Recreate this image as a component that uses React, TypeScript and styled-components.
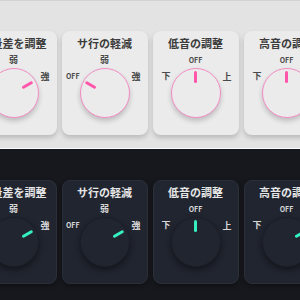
import React from "react";
import styled, { createGlobalStyle } from "styled-components";

const GlobalStyle = createGlobalStyle`
  html, body {
    margin: 0;
    padding: 0;
    width: 300px;
    height: 300px;
    overflow: hidden;
    font-family: "Noto Sans CJK JP", "Noto Sans", sans-serif;
  }
`;

type Mode = "light" | "dark";

const palette = {
  light: {
    page: "#e3e3e3",
    card: "#ebebeb",
    cardBorder: "transparent",
    cardShadow: "0 3px 5px rgba(0, 0, 0, 0.18)",
    title: "#3c3c3c",
    label: "#4a4a4a",
    knob: "#ebebeb",
    knobBorder: "1.5px solid #f48cc4",
    knobShadow: "0 3px 5px rgba(0, 0, 0, 0.2)",
    pointer: "#ff55aa",
  },
  dark: {
    page: "#17181d",
    card: "#212530",
    cardBorder: "#2b2f3a",
    cardShadow: "0 2px 4px rgba(0, 0, 0, 0.35)",
    title: "#e6e6e6",
    label: "#d8d8d8",
    knob: "#212530",
    knobBorder: "1.5px solid #1c1f28",
    knobShadow: "0 3px 6px rgba(0, 0, 0, 0.45)",
    pointer: "#35f0c2",
  },
};

const Section = styled.section<{ $mode: Mode }>`
  box-sizing: border-box;
  background: ${(p) => palette[p.$mode].page};
  border-top: ${(p) => (p.$mode === "light" ? "1px solid #d2d2d2" : "none")};
  border-bottom: ${(p) => (p.$mode === "light" ? "1px solid #fafafa" : "none")};
  height: ${(p) => (p.$mode === "light" ? "149px" : "151px")};
  padding-top: ${(p) => (p.$mode === "light" ? "30px" : "31px")};
`;

const Row = styled.div`
  display: flex;
  justify-content: center;
  gap: 5px;
`;

const Card = styled.div<{ $mode: Mode }>`
  flex: 0 0 84px;
  height: 104px;
  box-sizing: border-box;
  padding-top: 4px;
  border-radius: 8px;
  background: ${(p) => palette[p.$mode].card};
  border: 1px solid ${(p) => palette[p.$mode].cardBorder};
  box-shadow: ${(p) => palette[p.$mode].cardShadow};
  display: flex;
  flex-direction: column;
  align-items: center;
`;

const Title = styled.div<{ $mode: Mode }>`
  font-size: 11px;
  line-height: 14px;
  font-weight: 700;
  white-space: nowrap;
  color: ${(p) => palette[p.$mode].title};
  margin-bottom: 5px;
`;

const Dial = styled.div`
  display: grid;
  grid-template-columns: 1fr 50px 1fr;
  grid-template-rows: 10px 50px;
  row-gap: 3px;
  width: 84px;
`;

const Label = styled.span<{ $mode: Mode; $small?: boolean }>`
  font-size: ${(p) => (p.$small ? "7px" : "9px")};
  line-height: 10px;
  font-weight: 700;
  color: ${(p) => palette[p.$mode].label};
  white-space: nowrap;
`;

const TopLabel = styled(Label)`
  grid-column: 2;
  grid-row: 1;
  justify-self: center;
`;

const LeftLabel = styled(Label)`
  grid-column: 1;
  grid-row: 2;
  justify-self: end;
  margin-top: 3px;
`;

const RightLabel = styled(Label)`
  grid-column: 3;
  grid-row: 2;
  justify-self: start;
  margin-top: 4px;
  margin-left: 2px;
`;

const Knob = styled.div<{ $mode: Mode }>`
  grid-column: 2;
  grid-row: 2;
  position: relative;
  width: 50px;
  height: 50px;
  box-sizing: border-box;
  border-radius: 50%;
  background: ${(p) => palette[p.$mode].knob};
  border: ${(p) => palette[p.$mode].knobBorder};
  box-shadow: ${(p) => palette[p.$mode].knobShadow};
`;

const Pointer = styled.div<{ $mode: Mode; $angle: number }>`
  position: absolute;
  left: calc(50% - 1.5px);
  top: 1.5px;
  width: 3px;
  height: 12px;
  border-radius: 1.5px;
  background: ${(p) => palette[p.$mode].pointer};
  transform-origin: 1.5px 22px;
  transform: rotate(${(p) => p.$angle}deg);
`;

interface KnobSpec {
  title: string;
  top: string;
  left: string;
  right: string;
}

const knobs: KnobSpec[] = [
  { title: "音量差を調整", top: "弱", left: "", right: "強" },
  { title: "サ行の軽減", top: "弱", left: "OFF", right: "強" },
  { title: "低音の調整", top: "OFF", left: "下", right: "上" },
  { title: "高音の調整", top: "OFF", left: "下", right: "上" },
];

const angles: Record<Mode, number[]> = {
  light: [60, -60, 0, 0],
  dark: [60, 60, 0, 60],
};

const Panel: React.FC<{ mode: Mode }> = ({ mode }) => (
  <Section $mode={mode}>
    <Row>
      {knobs.map((k, i) => (
        <Card key={k.title} $mode={mode}>
          <Title $mode={mode}>{k.title}</Title>
          <Dial>
            <TopLabel $mode={mode} $small={k.top === "OFF"}>
              {k.top}
            </TopLabel>
            {k.left && (
              <LeftLabel $mode={mode} $small={k.left === "OFF"}>
                {k.left}
              </LeftLabel>
            )}
            <Knob $mode={mode}>
              <Pointer $mode={mode} $angle={angles[mode][i]} />
            </Knob>
            <RightLabel $mode={mode}>{k.right}</RightLabel>
          </Dial>
        </Card>
      ))}
    </Row>
  </Section>
);

export default function App() {
  return (
    <>
      <GlobalStyle />
      <Panel mode="light" />
      <Panel mode="dark" />
    </>
  );
}
